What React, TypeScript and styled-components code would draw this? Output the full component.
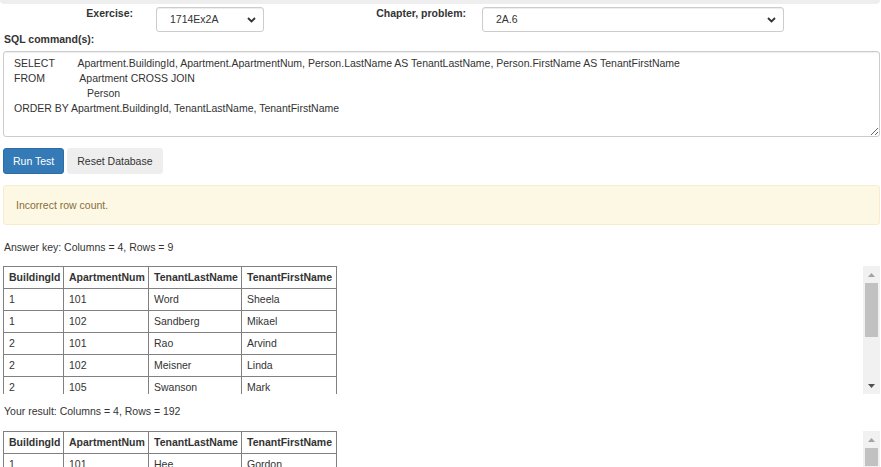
import React from 'react';
import styled, { createGlobalStyle } from 'styled-components';

const Global = createGlobalStyle`
  html, body { margin: 0; padding: 0; overflow: hidden; background: #fff; }
  body {
    font-family: "Liberation Sans", Arial, sans-serif;
    font-size: 10.5px;
    line-height: 15px;
    color: #333;
  }
  * { box-sizing: border-box; }
`;

const Page = styled.div`
  width: 881px;
`;

const TopBar = styled.div`
  height: 4px;
  width: 880px;
  background: #eee;
  border-radius: 0 0 4px 4px;
`;

const Content = styled.div`
  padding: 3px 1px 0 3px;
`;

const FormRow = styled.div`
  display: grid;
  grid-template-columns: 153px 108px 218px 302px;
  align-items: start;
`;

const FieldLabel = styled.label<{ $gap: number }>`
  font-weight: bold;
  text-align: right;
  padding-right: ${(p) => p.$gap}px;
  margin-top: -1px;
`;

const SelectBox = styled.div`
  height: 25px;
  border: 1px solid #ccc;
  border-radius: 3px;
  box-shadow: inset 0 1px 1px rgba(0, 0, 0, 0.075);
  background: #fff;
  display: flex;
  align-items: center;
  justify-content: space-between;
  padding: 0 7px 0 13px;
  color: #333;
`;

const SqlLabel = styled.div`
  font-weight: bold;
  margin-left: 1px;
`;

const SqlArea = styled.textarea`
  display: block;
  width: 100%;
  height: 86px;
  margin-top: 4px;
  padding: 4px 10px;
  border: 1px solid #ccc;
  border-radius: 3px;
  box-shadow: inset 0 1px 1px rgba(0, 0, 0, 0.075);
  font-family: "Liberation Sans", Arial, sans-serif;
  font-size: 10.5px;
  line-height: 15px;
  color: #333;
  white-space: pre;
  overflow: hidden;
  outline: none;
`;

const ButtonRow = styled.div`
  display: flex;
  gap: 3px;
  margin-top: 11px;
`;

const Button = styled.button<{ $primary?: boolean }>`
  height: 26px;
  padding: 0 9px;
  font-family: "Liberation Sans", Arial, sans-serif;
  font-size: 10.5px;
  line-height: 15px;
  border-radius: 3px;
  border: 1px solid ${(p) => (p.$primary ? '#2e6da4' : '#eee')};
  background: ${(p) => (p.$primary ? '#337ab7' : '#eee')};
  color: ${(p) => (p.$primary ? '#fff' : '#333')};
`;

const Alert = styled.div`
  margin-top: 11px;
  padding: 11.5px 12px;
  border: 1px solid #faebcc;
  background: #fcf8e3;
  color: #8a6d3b;
  border-radius: 3px;
`;

const Caption = styled.p<{ $top: number; $bottom: number }>`
  margin: ${(p) => p.$top}px 0 ${(p) => p.$bottom}px 1px;
`;

const ResultBox = styled.div`
  display: flex;
  height: 128px;
`;

const Viewport = styled.div`
  flex: 1;
  overflow: hidden;
`;

const Table = styled.table`
  border-collapse: collapse;
  table-layout: fixed;
  width: 333px;
`;

const Th = styled.th`
  border: 1px solid #808080;
  padding: 3px 5px;
  text-align: left;
  font-weight: bold;
  white-space: nowrap;
  line-height: 15px;
`;

const Td = styled.td`
  border: 1px solid #808080;
  padding: 3px 5px;
  white-space: nowrap;
  line-height: 15px;
`;

const ScrollBar = styled.div`
  width: 17px;
  background: #f1f1f1;
  display: flex;
  flex-direction: column;
  align-items: center;
`;

const ArrowBtn = styled.div`
  height: 17px;
  width: 17px;
  display: flex;
  align-items: center;
  justify-content: center;
  flex: none;
`;

const Thumb = styled.div<{ $h: number }>`
  width: 13px;
  height: ${(p) => p.$h}px;
  background: #c1c1c1;
  flex: none;
`;

const Spacer = styled.div`
  flex: 1;
`;

const Chevron = () => (
  <svg width="9" height="6" viewBox="0 0 9 6">
    <path d="M1 1 L4.5 4.5 L8 1" fill="none" stroke="#333" strokeWidth="1.8" />
  </svg>
);

const Tri = ({ up, color }: { up?: boolean; color: string }) => (
  <svg width="7" height="4" viewBox="0 0 7 4">
    <path d={up ? 'M0 4 L3.5 0 L7 4 Z' : 'M0 0 L3.5 4 L7 0 Z'} fill={color} />
  </svg>
);

type Row = [string, string, string, string];

const answerRows: Row[] = [
  ['1', '101', 'Word', 'Sheela'],
  ['1', '102', 'Sandberg', 'Mikael'],
  ['2', '101', 'Rao', 'Arvind'],
  ['2', '102', 'Meisner', 'Linda'],
  ['2', '105', 'Swanson', 'Mark'],
  ['3', '101', 'Hee', 'Gordon'],
  ['3', '102', 'Lopez', 'Maria'],
  ['3', '103', 'Chen', 'Li'],
  ['3', '104', 'Adams', 'Kim'],
];

const resultRows: Row[] = [
  ['1', '101', 'Hee', 'Gordon'],
  ['1', '101', 'Lopez', 'Maria'],
  ['1', '101', 'Meisner', 'Linda'],
  ['1', '101', 'Rao', 'Arvind'],
  ['1', '101', 'Sandberg', 'Mikael'],
];

const cols = [60, 85, 93, 95];
const headers = ['BuildingId', 'ApartmentNum', 'TenantLastName', 'TenantFirstName'];

const ResultTable = ({ rows, thumb }: { rows: Row[]; thumb: number }) => (
  <ResultBox>
    <Viewport>
      <Table>
        <colgroup>
          {cols.map((w, i) => (
            <col key={i} style={{ width: w }} />
          ))}
        </colgroup>
        <thead>
          <tr>
            {headers.map((h) => (
              <Th key={h}>{h}</Th>
            ))}
          </tr>
        </thead>
        <tbody>
          {rows.map((r, i) => (
            <tr key={i}>
              {r.map((c, j) => (
                <Td key={j}>{c}</Td>
              ))}
            </tr>
          ))}
        </tbody>
      </Table>
    </Viewport>
    <ScrollBar>
      <ArrowBtn>
        <Tri up color="#a3a3a3" />
      </ArrowBtn>
      <Thumb $h={thumb} />
      <Spacer />
      <ArrowBtn>
        <Tri color="#505050" />
      </ArrowBtn>
    </ScrollBar>
  </ResultBox>
);

const sql =
  'SELECT        Apartment.BuildingId, Apartment.ApartmentNum, Person.LastName AS TenantLastName, Person.FirstName AS TenantFirstName\n' +
  'FROM            Apartment CROSS JOIN\n' +
  '                         Person\n' +
  'ORDER BY Apartment.BuildingId, TenantLastName, TenantFirstName';

export default function App() {
  return (
    <Page>
      <Global />
      <TopBar />
      <Content>
        <FormRow>
          <FieldLabel $gap={23}>Exercise:</FieldLabel>
          <SelectBox>
            <span>1714Ex2A</span>
            <Chevron />
          </SelectBox>
          <FieldLabel $gap={16}>Chapter, problem:</FieldLabel>
          <SelectBox>
            <span>2A.6</span>
            <Chevron />
          </SelectBox>
        </FormRow>
        <SqlLabel>SQL command(s):</SqlLabel>
        <SqlArea readOnly defaultValue={sql} spellCheck={false} />
        <ButtonRow>
          <Button $primary>Run Test</Button>
          <Button>Reset Database</Button>
        </ButtonRow>
        <Alert>Incorrect row count.</Alert>
        <Caption $top={15} $bottom={11}>
          Answer key: Columns = 4, Rows = 9
        </Caption>
        <ResultTable rows={answerRows} thumb={54} />
        <Caption $top={10} $bottom={12}>
          Your result: Columns = 4, Rows = 192
        </Caption>
        <ResultTable rows={resultRows} thumb={18} />
      </Content>
    </Page>
  );
}
